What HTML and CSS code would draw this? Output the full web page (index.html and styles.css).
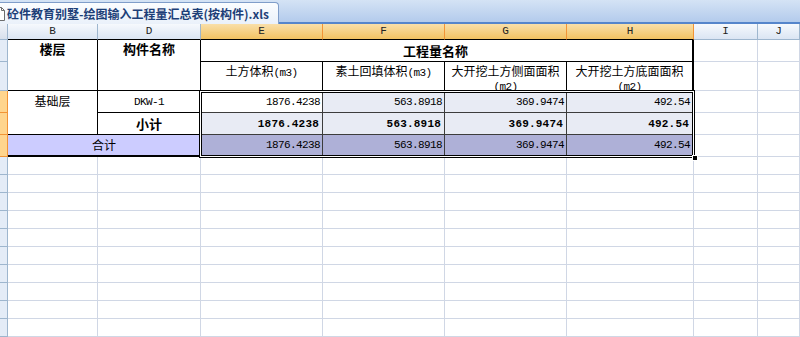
FILE: index.html
```html
<!DOCTYPE html>
<html lang="zh">
<head>
<meta charset="utf-8">
<title>工程量汇总表</title>
<link rel="stylesheet" href="styles.css">
</head>
<body>
<div class="tabbar">
  <div class="tab">
    <svg class="doc" width="10" height="14" viewBox="0 0 10 14"><path d="M0.5 0.5 H6.5 L9.5 3.5 V13.5 H0.5 Z" fill="#fff" stroke="#6d6d6d"/><path d="M6.5 0.5 V3.5 H9.5" fill="none" stroke="#6d6d6d"/></svg>
    <span class="tabtext">砼件教育别墅-绘图输入工程量汇总表(按构件).xls</span>
  </div>
</div>
<div class="sheet">
  <div class="corner"></div>
  <div class="ch tb">B</div><div class="ch tb">D</div>
  <div class="ch tb on">E</div><div class="ch tb on">F</div><div class="ch tb on">G</div><div class="ch tb on">H</div>
  <div class="ch">I</div><div class="ch">J</div>

  <div class="rh"></div>
  <div class="t hd r2">楼层</div>
  <div class="t hd r2">构件名称</div>
  <div class="t hd4 last">工程量名称</div>
  <div class="g"></div><div class="g"></div>

  <div class="rh"></div>
  <div class="t sub">土方体积<span class="u">(m3)</span></div>
  <div class="t sub">素土回填体积<span class="u">(m3)</span></div>
  <div class="t sub">大开挖土方侧面面积<span class="u">(m2)</span></div>
  <div class="t sub last">大开挖土方底面面积<span class="u">(m2)</span></div>
  <div class="g"></div><div class="g"></div>

  <div class="rh on"></div>
  <div class="t r2 floor">基础层</div>
  <div class="t mid code">DKW-1</div>
  <div class="t d num act">1876.4238</div>
  <div class="t d num sel">563.8918</div>
  <div class="t d num sel">369.9474</div>
  <div class="t d num sel last">492.54</div>
  <div class="g"></div><div class="g"></div>

  <div class="rh on"></div>
  <div class="t mid bold">小计</div>
  <div class="t d num sel b">1876.4238</div>
  <div class="t d num sel b">563.8918</div>
  <div class="t d num sel b">369.9474</div>
  <div class="t d num sel b last">492.54</div>
  <div class="g"></div><div class="g"></div>

  <div class="rh on"></div>
  <div class="t mid total">合计</div>
  <div class="t d num tot bot">1876.4238</div>
  <div class="t d num tot bot">563.8918</div>
  <div class="t d num tot bot">369.9474</div>
  <div class="t d num tot bot last">492.54</div>
  <div class="g"></div><div class="g"></div>

  <div class="rh"></div><div class="g"></div><div class="g"></div><div class="g"></div><div class="g"></div><div class="g"></div><div class="g"></div><div class="g"></div><div class="g"></div>
  <div class="rh"></div><div class="g"></div><div class="g"></div><div class="g"></div><div class="g"></div><div class="g"></div><div class="g"></div><div class="g"></div><div class="g"></div>
  <div class="rh"></div><div class="g"></div><div class="g"></div><div class="g"></div><div class="g"></div><div class="g"></div><div class="g"></div><div class="g"></div><div class="g"></div>
  <div class="rh"></div><div class="g"></div><div class="g"></div><div class="g"></div><div class="g"></div><div class="g"></div><div class="g"></div><div class="g"></div><div class="g"></div>
  <div class="rh"></div><div class="g"></div><div class="g"></div><div class="g"></div><div class="g"></div><div class="g"></div><div class="g"></div><div class="g"></div><div class="g"></div>
  <div class="rh"></div><div class="g"></div><div class="g"></div><div class="g"></div><div class="g"></div><div class="g"></div><div class="g"></div><div class="g"></div><div class="g"></div>
  <div class="rh"></div><div class="g"></div><div class="g"></div><div class="g"></div><div class="g"></div><div class="g"></div><div class="g"></div><div class="g"></div><div class="g"></div>
  <div class="rh"></div><div class="g"></div><div class="g"></div><div class="g"></div><div class="g"></div><div class="g"></div><div class="g"></div><div class="g"></div><div class="g"></div>
  <div class="rh"></div><div class="g"></div><div class="g"></div><div class="g"></div><div class="g"></div><div class="g"></div><div class="g"></div><div class="g"></div><div class="g"></div>
  <div class="rh"></div><div class="g"></div><div class="g"></div><div class="g"></div><div class="g"></div><div class="g"></div><div class="g"></div><div class="g"></div><div class="g"></div>

  <div class="selection"><span class="handle"></span></div>
</div>
</body>
</html>
```
FILE: styles.css
```css
* { box-sizing: border-box; }
html, body { margin: 0; padding: 0; }
body {
  width: 800px;
  height: 337px;
  overflow: hidden;
  background: #fff;
  font-family: "Noto Sans CJK SC", "Noto Sans", sans-serif;
  font-size: 12px;
  color: #000;
}

/* ---------- workbook tab bar ---------- */
.tabbar {
  height: 24px;
  background: linear-gradient(#d4e3f5, #b3cbec);
  border-bottom: 2px solid #5585cb;
  display: flex;
  align-items: flex-end;
}
.tab {
  position: relative;
  width: 279px;
  height: 22px;
  margin-bottom: -2px;
  background: linear-gradient(#fbfdff, #eaf1fa);
  border: 1px solid #7f9dc9;
  border-left: none;
  border-bottom: none;
  border-radius: 0 4px 0 0;
  display: flex;
  align-items: center;
  overflow: hidden;
}
.doc { margin-left: -5px; margin-top: 1px; flex: none; }
.tabtext {
  margin-left: 2px;
  font-weight: bold;
  font-size: 12px;
  color: #1d3f78;
  white-space: nowrap;
}

/* ---------- sheet grid ---------- */
.sheet {
  position: relative;
  display: grid;
  grid-template-columns: 8px 90px 103px 122px 122px 122px 127px 64px 1fr;
  grid-template-rows: 16px 22px 29px 22px 22px 22px repeat(10, 18px);
}

.corner {
  background: linear-gradient(#eef2f8, #d8e0ec);
  border-right: 1px solid #9eb6ce;
  border-bottom: 1px solid #9eb6ce;
}
.ch {
  background: linear-gradient(#f6f9fd, #dbe5f3);
  border-right: 1px solid #9eb6ce;
  border-bottom: 1px solid #9eb6ce;
  font-family: "Liberation Mono", monospace;
  font-size: 11px;
  line-height: 15px;
  text-align: center;
  color: #222;
}
.ch.on {
  background: linear-gradient(#f9dfa9, #f2c262);
  border-right-color: #f29436;
  border-bottom-color: #f29436;
}
.ch.tb { border-bottom-color: #000; }

.rh {
  background: #e4ecf7;
  border-right: 1px solid #9eb6ce;
  border-bottom: 1px solid #9eb6ce;
}
.rh.on {
  background: #ffd58d;
  border-right-color: #f29436;
  border-bottom-color: #f29436;
}

.g {
  border-right: 1px solid #d0d7e5;
  border-bottom: 1px solid #d0d7e5;
}

/* ---------- table cells ---------- */
.t {
  border-right: 1px solid #000;
  border-bottom: 1px solid #000;
  background: #fff;
}
.t.last { border-right: 2px solid #000; }
.r2 { grid-row: span 2; }

.hd {
  font-weight: bold;
  font-size: 13px;
  text-align: center;
  line-height: 15px;
  padding-top: 1px;
}
.hd4 {
  grid-column: span 4;
  font-weight: bold;
  font-size: 13px;
  display: flex;
  align-items: center;
  justify-content: center;
  padding-right: 22px;
}
.sub {
  text-align: center;
  line-height: 14px;
  padding: 2px 2px 0;
}
.u {
  font-family: "Liberation Mono", monospace;
  font-size: 11px;
  letter-spacing: -0.6px;
}
.floor {
  text-align: center;
  line-height: 14px;
  padding-top: 3px;
}
.mid {
  display: flex;
  align-items: center;
  justify-content: center;
}
.code {
  font-family: "Liberation Mono", monospace;
  font-size: 11px;
  letter-spacing: -0.6px;
}
.bold { font-weight: bold; font-size: 13px; }
.total {
  grid-column: span 2;
  background: #ccccff;
  border-bottom: 2px solid #000;
  padding-bottom: 1px;
}

.d { border-right-color: #3c3c3c; border-bottom-color: #3c3c3c; }
.num {
  display: flex;
  align-items: center;
  justify-content: flex-end;
  padding-right: 2px;
  font-family: "Liberation Mono", monospace;
  font-size: 11px;
  letter-spacing: -0.6px;
}
.num.b { font-weight: bold; letter-spacing: 0.2px; padding-right: 3px; }
.act { background: #fff; }
.sel { background: #e8ebf4; }
.tot { background: #aeb0d7; }
.bot { border-bottom: 2px solid #000; }

/* ---------- selection outline over E3:H5 ---------- */
.selection {
  position: absolute;
  grid-column: 4 / 8;
  grid-row: 4 / 7;
  top: -1px;
  left: -2px;
  right: -1px;
  bottom: -1px;
  border: 1px solid #000;
  box-shadow: inset 0 0 0 1px #fff, inset 0 0 0 2px #000;
  pointer-events: none;
}
.handle {
  position: absolute;
  right: -4px;
  bottom: -4px;
  width: 6px;
  height: 6px;
  background: #000;
  border: 1px solid #fff;
}
```
